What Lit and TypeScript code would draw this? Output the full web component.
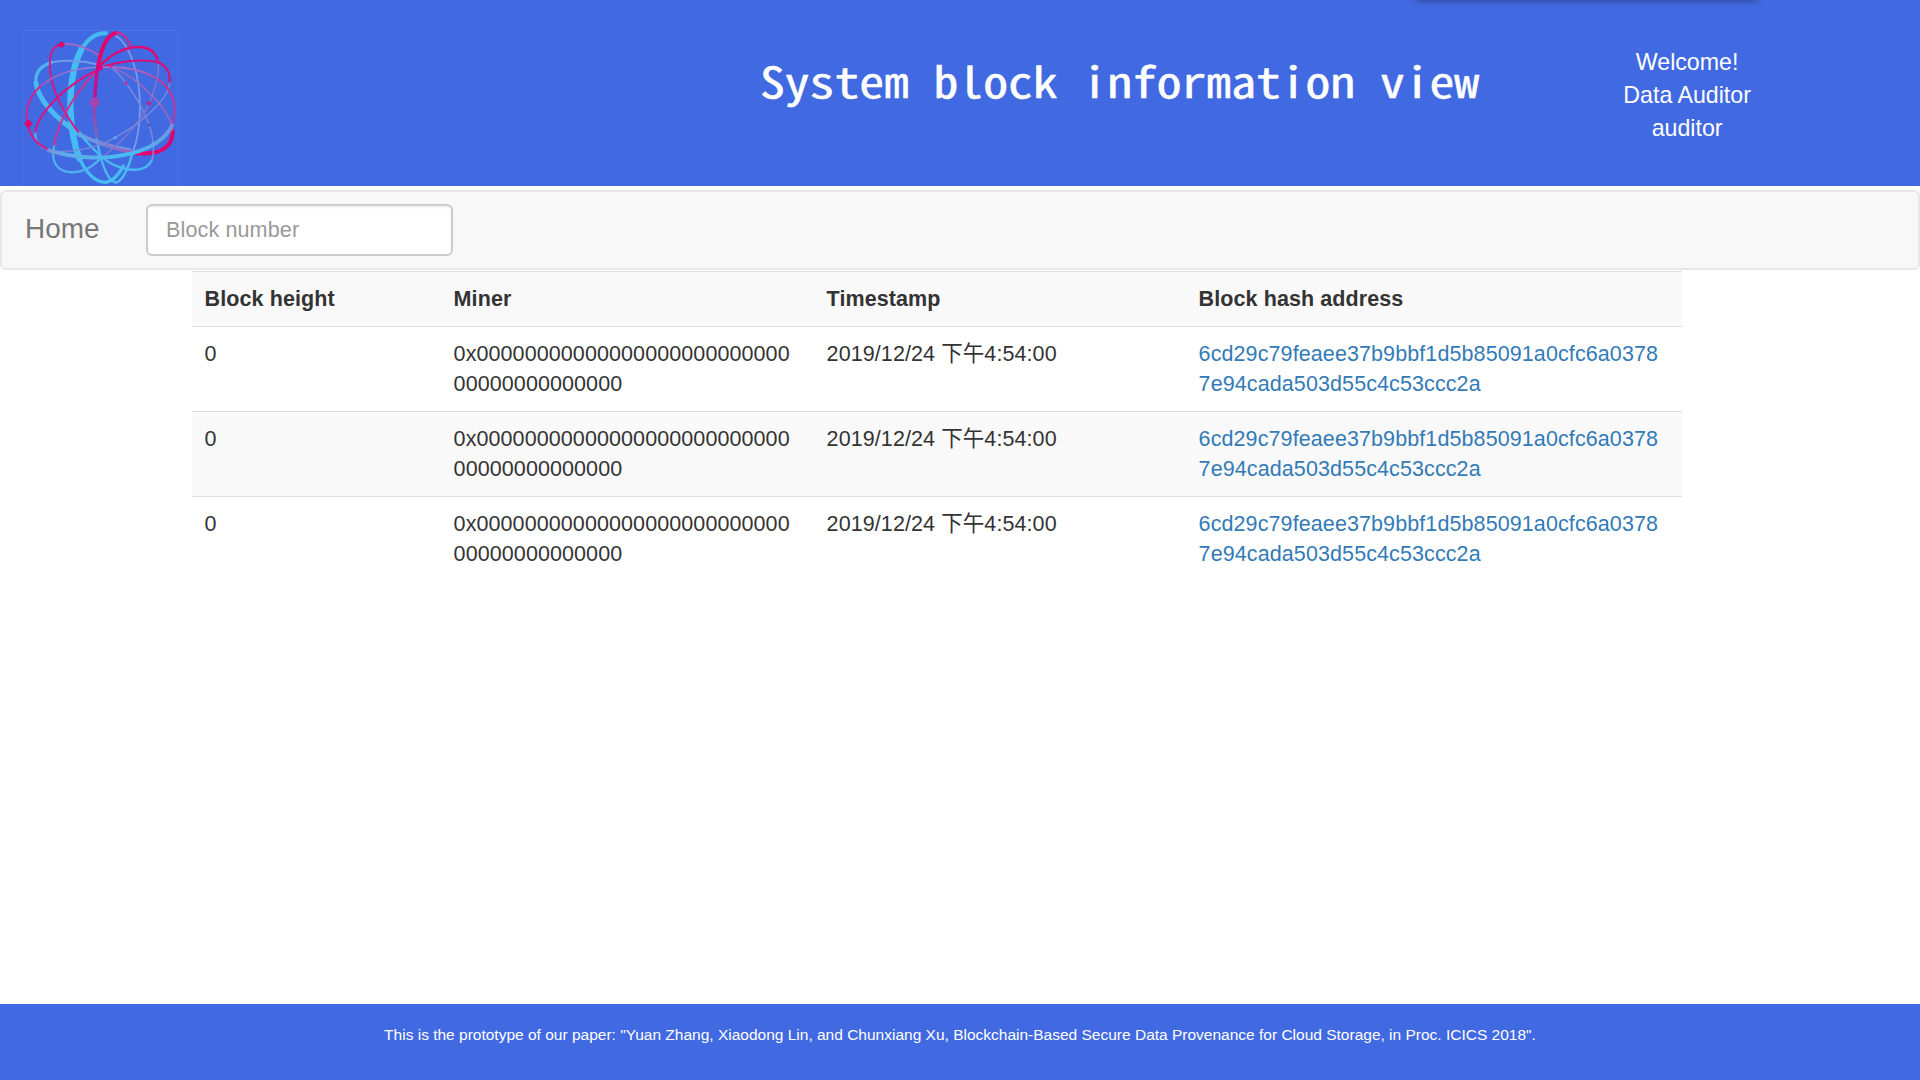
import { LitElement, html, css } from "lit";
import { customElement, property } from "lit/decorators.js";

interface Block {
  height: string;
  miner: string;
  time: string;
  hash: string;
}

const BLOCK: Block = {
  height: "0",
  miner: "0x0000000000000000000000000000000000000000",
  time: "2019/12/24 下午4:54:00",
  hash: "6cd29c79feaee37b9bbf1d5b85091a0cfc6a03787e94cada503d55c4c53ccc2a",
};

@customElement("orbit-logo")
class OrbitLogo extends LitElement {
  static styles = css`
    :host { display: block; width: 155px; height: 156px; }
    .art { display: block; width: 155px; height: 156px; }
  `;
  render() {
    return html`<svg class="art" viewBox="69 60 465 468" fill="none" stroke-linecap="round" stroke-linejoin="round">
      <defs>
        <linearGradient id="stem" gradientUnits="userSpaceOnUse" x1="0" y1="170" x2="0" y2="385">
          <stop offset="0" stop-color="#e0006f" /><stop offset=".45" stop-color="#b02e9c" /><stop offset="1" stop-color="#6f6dc8" />
        </linearGradient>
        <linearGradient id="side" gradientUnits="userSpaceOnUse" x1="0" y1="170" x2="0" y2="350">
          <stop offset="0" stop-color="#a070cf" /><stop offset=".35" stop-color="#cc2b93" /><stop offset="1" stop-color="#b53aa6" />
        </linearGradient>
        <linearGradient id="fade" gradientUnits="userSpaceOnUse" x1="80" y1="0" x2="300" y2="0">
          <stop offset="0" stop-color="#e3106f" /><stop offset=".3" stop-color="#a866c4" /><stop offset="1" stop-color="#8c86da" />
        </linearGradient>
        <linearGradient id="sweep" gradientUnits="userSpaceOnUse" x1="280" y1="0" x2="500" y2="0">
          <stop offset="0" stop-color="#6f8edc" /><stop offset=".5" stop-color="#a558b8" /><stop offset="1" stop-color="#e3006c" />
        </linearGradient>
        <linearGradient id="base" gradientUnits="userSpaceOnUse" x1="110" y1="0" x2="520" y2="0">
          <stop offset="0" stop-color="#8f80d0" /><stop offset=".2" stop-color="#5fa9e8" /><stop offset=".7" stop-color="#45bdf2" /><stop offset="1" stop-color="#7193df" />
        </linearGradient>
      </defs>
      <rect x="70.5" y="61.5" width="462" height="480" stroke="#5579e5" stroke-width="2" />

      <path d="M345 76C388 100 420 190 420 290C420 350 411 395 397 430" stroke="#7f9ce8" stroke-width="5" />
      <path d="M397 430C385 475 370 510 348 518C322 512 304 465 290 385" stroke="#4dbbf0" stroke-width="7" />
      <path d="M318 70C286 67 263 89 245 116" stroke="#45b9ef" stroke-width="12" />
      <path d="M245 116C224 155 211 220 211 290C213 350 222 405 238 445" stroke="#43bdf4" stroke-width="19" />
      <path d="M238 445C257 485 285 518 318 517C338 513 357 493 370 468" stroke="#45bdf2" stroke-width="10" />

      <path d="M300 165C240 149 185 150 155 157" stroke="#6f9ce8" stroke-width="6" />
      <path d="M155 157C120 168 104 187 108 220" stroke="#4eb4ee" stroke-width="10" />
      <path d="M108 220C116 270 165 323 240 374" stroke="#48baf1" stroke-width="15" />
      <path d="M240 374C280 395 330 410 390 421" stroke="#7594dd" stroke-width="12" />
      <path d="M300 395C350 425 420 433 470 426" stroke="url(#sweep)" stroke-width="9" />
      <path d="M410 430C473 436 520 416 518 360" stroke="#e1006d" stroke-width="11" />
      <path d="M518 360C510 302 425 207 332 170" stroke="#a765bd" stroke-width="4.5" />

      <path d="M184 103C214 97 258 111 302 139" stroke="#a767c3" stroke-width="5" />
      <path d="M184 103C151 110 147 142 151 190C160 250 188 305 238 370" stroke="#d51984" stroke-width="6" />
      <path d="M238 370C270 408 313 452 340 464C392 488 440 484 456 450" stroke="#48b9ef" stroke-width="7" />
      <path d="M456 450C464 423 460 380 448 345C433 306 412 264 378 220C365 202 350 184 332 170" stroke="#7889dc" stroke-width="4.5" />

      <path d="M296 172C325 139 370 109 420 111C452 113 468 128 474 154" stroke="#e10a72" stroke-width="7" />
      <path d="M474 154C480 188 467 232 447 280C420 340 360 402 300 447" stroke="#8175d0" stroke-width="4.5" />
      <path d="M300 447C263 486 220 494 187 481C162 468 154 440 163 405" stroke="#4eb3ed" stroke-width="7" />
      <path d="M163 405C171 351 205 270 292 180" stroke="#c83394" stroke-width="6" />

      <path d="M300 174C360 151 430 147 470 156C503 166 511 190 509 219" stroke="#de0b76" stroke-width="6" />
      <path d="M509 219C507 265 425 340 345 383C290 416 215 428 157 424" stroke="#7a88da" stroke-width="4.5" />
      <path d="M157 424C117 415 103 390 106 366" stroke="#5fa5e8" stroke-width="7" />
      <path d="M106 366C113 314 190 228 292 180" stroke="#db1380" stroke-width="6" />

      <path d="M120 230C170 187 240 170 320 172" stroke="url(#fade)" stroke-width="4.5" />
      <path d="M82 340C74 300 88 257 120 230" stroke="#d02490" stroke-width="6" />
      <path d="M320 172C430 168 508 212 522 275C526 300 523 325 517 346" stroke="url(#side)" stroke-width="6" />
      <path d="M82 340C90 388 122 411 163 427" stroke="#ca2190" stroke-width="7" />
      <path d="M147 421C230 447 320 449 395 430C455 415 500 383 516 347" stroke="url(#base)" stroke-width="12" />

      <path d="M291 382C284 340 282 304 284 277" stroke="url(#stem)" stroke-width="9" />
      <path d="M284 277C285 250 287 210 294 170" stroke="#c60f88" stroke-width="10" />
      <path d="M294 170C304 111 321 73 350 69" stroke="#e5006b" stroke-width="12" />
      <path d="M350 69C372 68 382 87 391 108" stroke="#cf2a8d" stroke-width="6" />

      <g stroke="none">
        <circle cx="284" cy="277" r="15" fill="#a643b3" />
        <path d="M85 328L98 341L85 354L72 341ZM184 94L196 104L184 114L172 104Z" fill="#e5006b" />
        <circle cx="300" cy="174" r="8" fill="#d5087c" /><circle cx="333" cy="169" r="5" fill="#c72b98" />
        <circle cx="378" cy="220" r="6" fill="#a43fae" /><circle cx="447" cy="280" r="7" fill="#bb269a" />
        <circle cx="448" cy="345" r="5" fill="#5656b5" /><circle cx="346" cy="383" r="5" fill="#4daeea" />
      </g>
    </svg>`;
  }
}

@customElement("block-table")
class BlockTable extends LitElement {
  @property({ attribute: false }) rows: Block[] = [];
  static styles = css`
    :host { display: block; width: 1490px; }
    .row { display: grid; grid-template-columns: 249px 373px 372px 496px; border-top: 1px solid #ddd; font-size: 21.5px; line-height: 30px; color: #333; letter-spacing: 0.09px; }
    .row:nth-child(odd) { background: #f9f9f9; }
    .cell { padding: 12px 16px 12px 12.6px; word-break: break-all; }
    .head { font-weight: 700; }
    .link { color: #337ab7; text-decoration: none; letter-spacing: 0.1px; }
  `;
  render() {
    return html`
      <div class="row head">
        <div class="cell">Block height</div><div class="cell">Miner</div><div class="cell">Timestamp</div><div class="cell">Block hash address</div>
      </div>
      ${this.rows.map((r) => html`<div class="row">
        <div class="cell">${r.height}</div>
        <div class="cell">${r.miner}</div>
        <div class="cell">${r.time}</div>
        <div class="cell"><a class="link">${r.hash}</a></div>
      </div>`)}`;
  }
}

@customElement("app-root")
class AppRoot extends LitElement {
  static styles = css`
    :host { display: flex; flex-direction: column; width: 1920px; height: 1080px; overflow: hidden; background: #fff; position: relative;
      font-family: "Liberation Sans", "Noto Sans CJK SC", sans-serif; }
    .top { height: 186px; flex: none; box-sizing: border-box; background: #4169e1; color: #fff; display: grid; grid-template-columns: 737px 1fr 464px; padding-left: 23px; }
    .logo { padding-top: 30px; }
    .title { margin: 48px 0 0; font: 400 49.6px/72px "Noto Sans CJK SC", sans-serif; font-feature-settings: "hwid"; white-space: pre; height: 72px; transform: scaleY(0.86); transform-origin: 0 0; -webkit-text-stroke: 0.6px #fff; }
    .user { padding: 46px 48px 0 0; text-align: center; font-size: 23.2px; line-height: 33px; }
    .shade { position: absolute; left: 1417px; top: -10px; width: 340px; height: 10px; box-shadow: 0 0 6px 1px rgba(30, 30, 60, 0.45); }
    .bar { height: 80px; flex: none; margin-top: 4px; box-sizing: border-box; display: flex; align-items: center; border: 2px solid #e7e7e7; border-radius: 6px; background: #f8f8f8; padding-left: 23px; }
    .home { width: 121px; font-size: 27.9px; line-height: 30px; color: #777; padding-bottom: 2px; }
    .field { width: 307px; height: 52px; box-sizing: border-box; border: 2px solid #ccc; border-radius: 6px; padding: 0 18px 1px; background: #fff; font: 21.6px "Liberation Sans", sans-serif; letter-spacing: 0.1px; box-shadow: inset 0 1.5px 1.5px rgba(0, 0, 0, 0.075); outline: none; }
    .field::placeholder { color: #999; opacity: 1; }
    .main { flex: 1; padding: 1px 0 0 192px; }
    .foot { height: 76px; flex: none; box-sizing: border-box; padding-top: 20px; background: #4169e1; color: #fff; text-align: center; font-size: 15.5px; line-height: 21px; }
  `;
  render() {
    return html`
      <header class="top">
        <orbit-logo class="logo"></orbit-logo>
        <h1 class="title">System block information view</h1>
        <div class="user"><div>Welcome!</div><div>Data Auditor</div><div>auditor</div></div>
      </header>
      <div class="shade"></div>
      <nav class="bar">
        <span class="home">Home</span>
        <input class="field" placeholder="Block number" />
      </nav>
      <main class="main"><block-table .rows=${[BLOCK, BLOCK, BLOCK]}></block-table></main>
      <footer class="foot"><span class="note">This is the prototype of our paper: "Yuan Zhang, Xiaodong Lin, and Chunxiang Xu, Blockchain-Based Secure Data Provenance for Cloud Storage, in Proc. ICICS 2018".</span></footer>
    `;
  }
}
